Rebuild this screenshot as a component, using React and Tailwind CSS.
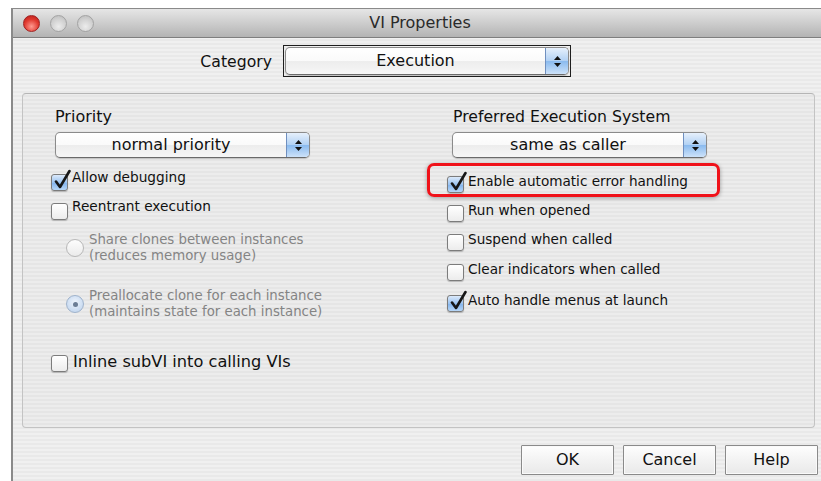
import React from "react";

// Aqua-style stepper arrows on the right of a popup button
function Stepper() {
  return (
    <div className="w-[23px] self-stretch flex flex-col items-center justify-center gap-[3px] border-l border-[#6f8fbf] bg-[linear-gradient(to_bottom,#e6f0fc_0%,#b3d2f4_48%,#8bbbef_52%,#cde2f9_100%)]">
      <svg width="7" height="4" viewBox="0 0 7 4">
        <path d="M3.5 0 L7 4 L0 4 Z" fill="#111" />
      </svg>
      <svg width="7" height="4" viewBox="0 0 7 4">
        <path d="M0 0 L7 0 L3.5 4 Z" fill="#111" />
      </svg>
    </div>
  );
}

function PopUp({ label, className = "" }) {
  return (
    <div
      className={`flex rounded-[5px] border border-[#8b8b8b] border-b-[#6a6a6a] shadow-[0_1px_1px_rgba(0,0,0,0.18)] overflow-hidden bg-[linear-gradient(to_bottom,#ffffff_0%,#fafafa_50%,#ededed_52%,#f6f6f6_100%)] ${className}`}
    >
      <div className="flex-1 flex items-center justify-center text-[16px] text-[#111]">
        {label}
      </div>
      <Stepper />
    </div>
  );
}

function Check({ checked }) {
  return (
    <span
      className={`relative shrink-0 w-[17px] h-[17px] rounded-[3px] border border-[#7c7c7c] shadow-[0_1px_1px_rgba(0,0,0,0.22)] ${
        checked
          ? "bg-[linear-gradient(to_bottom,#dbe9fa,#9cc4f1_50%,#86b6ee_55%,#b7d6f6)] border-[#5d7aa3]"
          : "bg-[linear-gradient(to_bottom,#ffffff,#ececec)]"
      }`}
    >
      {checked && (
        <svg
          className="absolute -top-[6px] left-[1px]"
          width="18"
          height="21"
          viewBox="0 0 18 21"
        >
          <path
            d="M3 12.5 L7 18 L16.5 2"
            fill="none"
            stroke="#161616"
            strokeWidth="2.6"
            strokeLinecap="round"
            strokeLinejoin="round"
          />
        </svg>
      )}
    </span>
  );
}

function Radio({ selected }) {
  return (
    <span
      className={`shrink-0 w-[18px] h-[18px] rounded-full border flex items-center justify-center ${
        selected
          ? "border-[#9fb3cc] bg-[radial-gradient(circle_at_50%_40%,#eef4fc,#b9d0ec)]"
          : "border-[#b8b8b8] bg-[linear-gradient(to_bottom,#fdfdfd,#ebebeb)]"
      }`}
    >
      {selected && <span className="w-[5px] h-[5px] rounded-full bg-[#6b7d95]" />}
    </span>
  );
}

// left column rows: label sits a little above the box
function LeftCheck({ checked, label, className = "" }) {
  return (
    <div className={`flex items-start gap-[4px] ${className}`}>
      <Check checked={checked} />
      <span className="relative -top-[5px] text-[13.7px] leading-[16px] text-[#111]">
        {label}
      </span>
    </div>
  );
}

function RightCheck({ checked, label, className = "" }) {
  return (
    <div className={`flex items-start gap-[4px] ${className}`}>
      <Check checked={checked} />
      <span className="relative -top-[3px] text-[13.6px] leading-[16px] text-[#111]">
        {label}
      </span>
    </div>
  );
}

function RadioRow({ selected, lines, className = "" }) {
  return (
    <div className={`flex items-center gap-[5px] ml-[15px] ${className}`}>
      <Radio selected={selected} />
      <div className="text-[13.3px] leading-[16px] text-[#848484]">
        {lines.map((l) => (
          <div key={l}>{l}</div>
        ))}
      </div>
    </div>
  );
}

function Button({ children }) {
  return (
    <button className="w-[93px] h-[30px] border border-[#8a8a8a] rounded-[1px] bg-[linear-gradient(to_bottom,#fefefe,#f3f3f3_50%,#e9e9e9)] shadow-[inset_0_0_0_1px_#fafafa] text-[16px] text-[#111]">
      {children}
    </button>
  );
}

export default function App() {
  return (
    <div className="w-[821px] h-[481px] overflow-hidden bg-white pl-[11px] pt-[8px] font-['DejaVu_Sans',sans-serif]">
      <div className="h-[480px] border-l-2 border-t border-[#8a8a8a] flex flex-col bg-[repeating-linear-gradient(to_bottom,#f0f0f0_0px,#f0f0f0_2px,#e9e9e9_2px,#e9e9e9_4px)]">
        {/* title bar */}
        <div className="h-[29px] shrink-0 flex items-center border-b border-[#7e7e7e] bg-[linear-gradient(to_bottom,#e6e6e6,#cdcdcd_50%,#b3b3b3)]">
          <div className="w-[94px] flex items-center gap-[10px] pl-[10px]">
            <span className="w-[17px] h-[17px] rounded-full border border-[#a02020] bg-[radial-gradient(circle_at_50%_70%,#ff9a90,#e0392f_55%,#b51d19)]" />
            <span className="w-[17px] h-[17px] rounded-full border border-[#a3a3a3] bg-[radial-gradient(circle_at_50%_70%,#ececec,#cfcfcf_60%,#b9b9b9)]" />
            <span className="w-[17px] h-[17px] rounded-full border border-[#a3a3a3] bg-[radial-gradient(circle_at_50%_70%,#ececec,#cfcfcf_60%,#b9b9b9)]" />
          </div>
          <div className="flex-1 pr-[88px] text-center text-[16px] text-[#2a2a2a]">
            VI Properties
          </div>
        </div>

        {/* category */}
        <div className="flex items-center mt-[7px]">
          <span className="w-[270px] pr-[11px] text-right text-[15.7px] text-[#111] translate-y-[1px]">
            Category
          </span>
          <div className="w-[288px] h-[32px] border border-[#1e1e1e] p-[1px]">
            <PopUp label="Execution" className="h-full" />
          </div>
        </div>

        {/* options group */}
        <div className="ml-[9px] mt-[16px] w-[793px] h-[335px] rounded-[4px] border border-[#c3c3c3] border-t-[#b5b5b5] bg-black/[0.015] grid grid-cols-[396px_1fr] pl-[28px] pt-[14px]">
          <div className="flex flex-col">
            <div className="ml-[4px] h-[18px] text-[16px] leading-[18px] text-[#111]">
              Priority
            </div>
            <PopUp label="normal priority" className="ml-[4px] mt-[6px] w-[255px] h-[26px]" />
            <LeftCheck checked label="Allow debugging" className="mt-[16px]" />
            <LeftCheck label="Reentrant execution" className="mt-[12px]" />
            <RadioRow
              lines={["Share clones between instances", "(reduces memory usage)"]}
              className="mt-[12px]"
            />
            <RadioRow
              selected
              lines={[
                "Preallocate clone for each instance",
                "(maintains state for each instance)",
              ]}
              className="mt-[24px]"
            />
            <div className="flex items-start gap-[5px] mt-[35px]">
              <Check />
              <span className="relative -top-[3px] text-[16.2px] leading-[19px] text-[#111]">
                Inline subVI into calling VIs
              </span>
            </div>
          </div>

          <div className="flex flex-col">
            <div className="ml-[6px] h-[18px] text-[15.7px] leading-[18px] text-[#111]">
              Preferred Execution System
            </div>
            <PopUp label="same as caller" className="ml-[5px] mt-[6px] w-[255px] h-[26px]" />
            <div className="relative mt-[18px]">
              <RightCheck checked label="Enable automatic error handling" />
              <div className="absolute -left-[20px] -top-[13px] w-[293px] h-[34px] rounded-[7px] border-[3px] border-[#f0121a] shadow-[0_1px_4px_rgba(0,0,0,0.35)]" />
            </div>
            <RightCheck label="Run when opened" className="mt-[12px]" />
            <RightCheck label="Suspend when called" className="mt-[12px]" />
            <RightCheck label="Clear indicators when called" className="mt-[13px]" />
            <RightCheck checked label="Auto handle menus at launch" className="mt-[14px]" />
          </div>
        </div>

        {/* dialog buttons */}
        <div className="flex justify-end gap-[9px] pr-[3px] mt-[17px]">
          <Button>OK</Button>
          <Button>Cancel</Button>
          <Button>Help</Button>
        </div>
      </div>
    </div>
  );
}
